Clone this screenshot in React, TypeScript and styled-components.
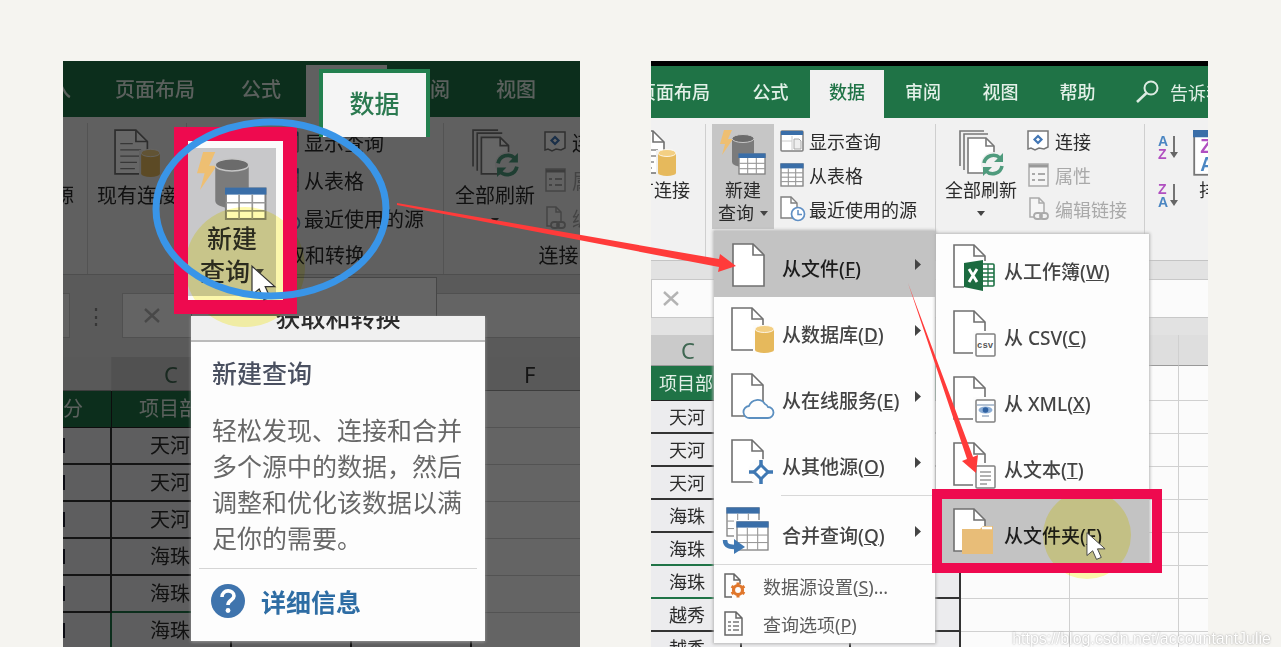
import React from "react";
import styled, { createGlobalStyle, css, ThemeProvider } from "styled-components";

const Global = createGlobalStyle`
  * { box-sizing: border-box; }
  body { margin: 0; background: #fff; font-family: "Noto Sans", "Noto Sans CJK SC", sans-serif; color: #2b2b2b; }
  button { font: inherit; color: inherit; background: none; border: 0; padding: 0; margin: 0; text-align: left; white-space: nowrap; }
  svg { display: block; flex: none; overflow: visible; }
`;

const large = { text: 20, row: 38, tabs: 56, ribbon: 158, icon: 48, under: 7, line: 24, strip: 18, formula: 45, gap: 19, head: 34, band: 37, cell: 37 };
const small = { text: 18, row: 34, tabs: 52, ribbon: 143, icon: 46, under: 3, line: 23, strip: 18, formula: 39, gap: 17, head: 31, band: 35, cell: 33 };
type Scale = typeof large;
const px = (k: keyof Scale) => (p: any) => `${p.theme[k]}px`;

/* ---------- page ---------- */
const Stage = styled.main`
  position: relative;
  display: grid;
  grid-template-columns: minmax(0, 63fr) minmax(0, 517fr) minmax(0, 71fr) minmax(0, 557fr) minmax(0, 73fr);
  padding-top: 61px;
  background: #f5f4f0;
  overflow: hidden;
`;
const Panel = styled.section<{ $col: number }>`
  position: relative;
  grid-column: ${(p) => p.$col};
  grid-row: 1;
  height: 586px;
  overflow: hidden;
  background: #fbfbfb;
`;
const Shade = styled.div`
  position: absolute;
  inset: 0;
  background: rgba(0, 0, 0, 0.6);
`;
const Arrows = styled.svg`
  position: absolute;
  inset: 0;
  width: 100%;
  height: 100%;
  pointer-events: none;
`;
const Watermark = styled.a`
  position: absolute;
  right: 10px;
  bottom: 0;
  font: 16px/16px "Liberation Sans", sans-serif;
  color: #fff;
  text-decoration: none;
  text-shadow: 0 0 2px #808080;
  opacity: 0.85;
`;

/* ---------- tab bar ---------- */
const TitleStrip = styled.div`
  height: 5px;
  background: #000;
`;
const Tabs = styled.nav`
  display: flex;
  height: ${px("tabs")};
  background: #1f7346;
  color: #e3f0e8;
`;
const Tab = styled.button<{ $w: number; $on?: boolean; $end?: number }>`
  flex: none;
  display: flex;
  align-items: center;
  justify-content: ${(p) => (p.$end ? "flex-end" : "center")};
  width: ${(p) => p.$w}px;
  padding-right: ${(p) => p.$end ?? 0}px;
  padding-bottom: 2px;
  font-size: ${px("text")};
  font-weight: 500;
  ${(p) => p.$on && css`margin-top: 4px; padding-bottom: 6px; background: #f1f1f1; color: #1f7346;`}
`;
const Search = styled.button`
  flex: none;
  display: flex;
  align-items: center;
  gap: 10px;
  margin-left: 20px;
  font-size: ${px("text")};
`;

/* ---------- ribbon ---------- */
const Ribbon = styled.div`
  display: flex;
  height: ${px("ribbon")};
  padding-top: 6px;
  overflow: hidden;
  background: #f1f1f1;
  border-bottom: 1px solid #c4c4c4;
`;
const Group = styled.div<{ $w: number; $end?: number }>`
  flex: none;
  display: flex;
  flex-direction: column;
  width: ${(p) => p.$w}px;
  align-items: ${(p) => (p.$end ? "flex-end" : "stretch")};
  padding-right: ${(p) => p.$end ?? 0}px;
  overflow: hidden;
  border-right: 1px solid #cfcfcf;
`;
const GroupBody = styled.div`
  display: flex;
`;
const GroupName = styled.div`
  padding-top: 5px;
  text-align: center;
  font-size: ${px("text")};
  line-height: 28px;
`;
const Big = styled.button<{ $w: number; $ml?: number; $on?: boolean }>`
  flex: none;
  display: flex;
  flex-direction: column;
  align-items: center;
  width: ${(p) => p.$w}px;
  margin-left: ${(p) => p.$ml ?? 0}px;
  padding: 6px 0 4px;
  background: ${(p) => (p.$on ? "#c6c6c6" : "none")};
  font-size: ${px("text")};
  line-height: ${px("line")};
  text-align: center;
  & > svg { margin-bottom: ${px("under")}; height: ${px("icon")}; width: auto; }
`;
const BigLine = styled.span`
  display: flex;
  align-items: center;
  justify-content: center;
  gap: 6px;
  height: ${px("line")};
`;
const List = styled.div<{ $ml: number }>`
  flex: none;
  display: flex;
  flex-direction: column;
  margin-left: ${(p) => p.$ml}px;
`;
const Small = styled.button<{ $off?: boolean }>`
  display: flex;
  align-items: center;
  gap: 5px;
  height: ${px("row")};
  font-size: ${px("text")};
  color: ${(p) => (p.$off ? "#a9a9a9" : "inherit")};
`;
const SortList = styled.div`
  flex: none;
  display: flex;
  flex-direction: column;
  gap: 20px;
  padding: 10px 12px 0;
`;

/* ---------- formula bar and sheet ---------- */
const Strip = styled.div<{ $h: "strip" | "gap" }>`
  height: ${(p) => px(p.$h)(p)};
  background: #e2e2e2;
`;
const Formula = styled.div`
  display: flex;
  height: ${px("formula")};
  background: #e2e2e2;
`;
const NameBox = styled.div`
  width: 7px;
  border: 1px solid #c8c8c8;
  border-left: 0;
  background: #f6f6f6;
`;
const Grip = styled.div`
  width: 52px;
  text-align: center;
  line-height: 44px;
  font-size: 22px;
  color: #888;
`;
const Entry = styled.div<{ $pad: number }>`
  flex: 1;
  display: flex;
  align-items: center;
  padding-left: ${(p) => p.$pad}px;
  border: 1px solid #c8c8c8;
  border-right: 0;
  background: #fbfbfb;
`;
const Sheet = styled.table`
  table-layout: fixed;
  border-collapse: separate;
  border-spacing: 0;
  width: 100%;
  font-size: ${px("text")};
  th, td {
    height: ${px("cell")};
    padding: 0;
    overflow: hidden;
    white-space: nowrap;
    font-weight: 400;
    text-align: left;
    line-height: 24px;
    border: 0 solid #d0d0d0;
    border-width: 0 1px 1px 0;
  }
  th:last-child, td:last-child { border-right-width: 0; }
`;
const ColHead = styled.th<{ $on?: boolean; $pad?: number }>`
  && {
    height: ${px("head")};
    padding-left: ${(p) => p.$pad ?? 0}px;
    background: ${(p) => (p.$on ? "#cacaca" : "#dedede")};
    border-bottom-color: #999;
    color: ${(p) => (p.$on ? "#3f6752" : "#333")};
    font-size: 22px;
  }
`;
const Band = styled.th<{ $pad: number }>`
  && {
    height: ${px("band")};
    padding-left: ${(p) => p.$pad}px;
    background: #1f7346;
    color: #e3f0e8;
    border-color: #222;
  }
`;
const Cell = styled.td<{ $pad?: number; $green?: boolean; $edge?: boolean }>`
  && {
    padding-left: ${(p) => p.$pad ?? 0}px;
    background: #ececee;
    border-color: #333;
    border-right-width: 2px;
    border-bottom-width: 2px;
    ${(p) => p.$green && css`border-bottom-color: #1f7346;`}
    ${(p) => p.$edge && css`border-right-color: #1f7346;`}
  }
`;
const Tick = styled.i`
  display: block;
  width: 2px;
  height: 15px;
  background: #223;
`;

/* ---------- menus ---------- */
const Menu = styled.div<{ $x: number; $y: number; $w: number }>`
  position: absolute;
  left: ${(p) => p.$x}px;
  top: ${(p) => p.$y}px;
  width: ${(p) => p.$w}px;
  display: flex;
  flex-direction: column;
  background: #fdfdfd;
  box-shadow: 0 0 3px 1px #b5b5b5;
`;
const Item = styled.button<{ $on?: boolean }>`
  display: flex;
  align-items: center;
  gap: 7px;
  height: 66px;
  padding: 0 14px 0 17px;
  font-size: 19px;
  font-weight: 500;
  color: ${(p) => (p.$on ? "#1c1c1c" : "#444")};
  background: ${(p) => (p.$on ? "#c3c3c3" : "none")};
`;
const ItemText = styled.span`
  flex: 1;
  padding-top: 8px;
`;
const MinorItem = styled.button`
  display: flex;
  align-items: center;
  gap: 17px;
  height: 38px;
  padding-left: 10px;
  font-size: 18px;
  color: #5c5c5c;
`;
const Rule = styled.hr<{ $from: number }>`
  width: calc(100% - ${(p) => p.$from}px);
  margin: 0 0 2px ${(p) => p.$from}px;
  border: 0;
  border-top: 1px solid #d8d8d8;
`;
const Frame = styled.div<{ $x: number; $y: number; $w: number; $h: number; $b: number }>`
  position: absolute;
  left: ${(p) => p.$x}px;
  top: ${(p) => p.$y}px;
  width: ${(p) => p.$w}px;
  height: ${(p) => p.$h}px;
  border: ${(p) => p.$b}px solid #ee0a4f;
  pointer-events: none;
`;
const Glow = styled.div<{ $x: number; $y: number; $r: number }>`
  position: absolute;
  left: ${(p) => p.$x - p.$r}px;
  top: ${(p) => p.$y - p.$r}px;
  width: ${(p) => p.$r * 2}px;
  height: ${(p) => p.$r * 2}px;
  border-radius: 50%;
  background: #fffbae;
  mix-blend-mode: multiply;
`;
const Pointer = styled.svg<{ $x: number; $y: number }>`
  position: absolute;
  left: ${(p) => p.$x}px;
  top: ${(p) => p.$y}px;
`;

/* ---------- spotlit pieces of the left panel ---------- */
const SpotTab = styled.button`
  && {
    position: absolute;
    left: 256px;
    top: 8px;
    width: 111px;
    height: 68px;
    padding-bottom: 6px;
    border: 4px solid #23804f;
    border-bottom: 0;
    background: #f5f5f5;
    color: #2b7a50;
    text-align: center;
    font-size: 25px;
    font-weight: 500;
  }
`;
const BackMenu = styled.div`
  position: absolute;
  left: 128px;
  top: 216px;
  width: 246px;
  height: 40px;
  background: #fdfdfd;
  border: 1px solid #b0b0b0;
`;
const Tip = styled.aside`
  position: absolute;
  left: 128px;
  top: 255px;
  width: 294px;
  background: #fdfdfd;
  box-shadow: 0 1px 3px #999;
`;
const TipHead = styled.div`
  height: 26px;
  overflow: hidden;
  background: #f0f0f0;
  border-bottom: 2px solid #bbb;
  text-align: center;
  font-size: 25px;
  font-weight: 500;
  line-height: 2px;
`;
const TipTitle = styled.h2`
  margin: 0;
  padding: 13px 21px 0;
  font-size: 25px;
  font-weight: 500;
  line-height: 36px;
  color: #4a5060;
`;
const TipText = styled.p`
  margin: 0;
  padding: 21px 16px 12px 21px;
  font-size: 25px;
  line-height: 36px;
  color: #686868;
`;
const TipFoot = styled.div`
  display: flex;
  align-items: center;
  gap: 16px;
  height: 73px;
  margin: 0 8px;
  padding: 0 0 8px 12px;
  border-top: 1px solid #d5d5d5;
`;
const TipLink = styled.a`
  font-size: 25px;
  font-weight: 700;
  color: #2e6da4;
  text-decoration: none;
`;
const Spot = styled.div`
  position: absolute;
  left: 111px;
  top: 66px;
  width: 123px;
  height: 187px;
  padding: 7px 7px 4px 0;
  border: 14px solid #ee0a4f;
  background: #fbfbfb;
`;
const SpotButton = styled.button`
  && {
    display: flex;
    flex-direction: column;
    align-items: center;
    width: 88px;
    height: 100%;
    padding-top: 4px;
    background: #c8c8ca;
    font-size: 25px;
    font-weight: 500;
    line-height: 33px;
  }
`;
const SpotLine = styled.span`
  display: flex;
  align-items: center;
  gap: 6px;
`;
const Ring = styled.svg`
  position: absolute;
  left: 90px;
  top: 58px;
`;

/* ---------- icons ---------- */
const PAGE = "M1 1h20l11 11v31H1z";
const Page = ({ stroke = "#707070" }: { stroke?: string }) => (
  <g fill="#fff" stroke={stroke} strokeWidth="1.6">
    <path d={PAGE} />
    <path d="M21 1v11h11" fill="none" />
  </g>
);
const Cyl = ({ x, y, w, h, c, top }: any) => (
  <g>
    <path d={`M${x} ${y + 3}v${h - 6}a${w / 2} 3 0 0 0 ${w} 0v-${h - 6}z`} fill={c} />
    <ellipse cx={x + w / 2} cy={y + 3} rx={w / 2} ry="3.5" fill={top} stroke="#fff" strokeWidth=".8" />
  </g>
);
const Icon = ({ children, w = 44, h = 46 }: any) => (
  <svg width={w} height={h} viewBox={`0 0 ${w} ${h}`} fill="none" aria-hidden="true">{children}</svg>
);
const Caret = () => <svg width="8" height="5" viewBox="0 0 8 5" aria-hidden="true"><path d="M0 0h8L4 5z" fill="#444" /></svg>;
const Next = () => <svg width="6" height="11" viewBox="0 0 6 11" aria-hidden="true"><path d="M0 0l6 5.5L0 11z" fill="#444" /></svg>;
const Cross = () => <svg width="16" height="15" viewBox="0 0 16 15" aria-hidden="true"><path d="M1 1l14 13M15 1L1 14" stroke="#b3b3b3" strokeWidth="2.4" /></svg>;

const ConnIcon = () => (
  <Icon>
    <Page />
    <path d="M6 14h12M6 20h20M6 26h18M6 32h16M6 38h14" stroke="#8a8a8a" strokeWidth="1.3" />
    <path d="M24 20h20v26H24z" fill="#f1f1f1" />
    <Cyl x={26} y={20} w={18} h={26} c="#e6b95c" top="#f3cf83" />
  </Icon>
);
const Grid = ({ x, y, w, h, rows = 3 }: any) => (
  <g>
    <rect x={x} y={y} width={w} height={h} fill="#fff" stroke="#808080" strokeWidth="1.3" />
    <rect x={x - 0.6} y={y - 0.6} width={w + 1.2} height={h / 5 + 0.6} fill="#3a6ea8" />
    {[1, 2].map((i) => <path key={i} d={`M${x + (w * i) / 3} ${y + h / 5}v${h * 0.8}`} stroke="#999" strokeWidth="1.1" />)}
    {Array.from({ length: rows - 1 }, (_, i) => (
      <path key={i} d={`M${x} ${y + h / 5 + (h * 0.8 * (i + 1)) / rows}h${w}`} stroke="#999" strokeWidth="1.1" />
    ))}
  </g>
);
const QueryIcon = ({ size = 46 }: { size?: number }) => (
  <svg width={size} height={size} viewBox="0 0 46 46" fill="none" aria-hidden="true">
    <path d="M4 0h8L8 9h5L2 25l3-11H0z" fill="#eebf72" />
    <path d="M12 9v23a11 5 0 0 0 22 0V9z" fill="#7b7b7b" />
    <ellipse cx="23" cy="8.500" rx="11" ry="4" fill="#6b6b6b" stroke="#c6c6c6" />
    <Grid x={19} y={24} w={26} h={20} rows={3} />
  </svg>
);
const RefreshIcon = () => (
  <Icon>
    <path d="M1 36V1h24M5 40V4h24" stroke="#777" strokeWidth="1.6" />
    <path d="M9 8h18l8 8v27H9z" fill="#fff" stroke="#777" strokeWidth="1.6" />
    <path d="M27 8v8h8" stroke="#777" strokeWidth="1.6" />
    <circle cx="34" cy="34" r="12" fill="#f1f1f1" />
    <path d="M25 33a9.500 9.500 0 0 1 16-5M43 36a9.500 9.500 0 0 1-16 5" stroke="#4f9b7d" strokeWidth="3.600" />
    <path d="M44 23v9h-9zM24 46v-9h9z" fill="#4f9b7d" />
  </Icon>
);
const ShowIcon = () => (
  <Icon w={24} h={24}>
    <rect x="1" y="2" width="22" height="20" rx="1" fill="#fff" stroke="#808080" strokeWidth="1.5" />
    <path d="M1 2h22v4H1z" fill="#3a6ea8" />
    <path d="M2 12h10V7M12 12v9" stroke="#ccc" />
    <path d="M14 10h5l2 2v8h-7z" fill="#eee" stroke="#aaa" />
  </Icon>
);
const TableIcon = () => <Icon w={24} h={24}><Grid x={1} y={1} w={22} h={22} rows={4} /></Icon>;
const RecentIcon = () => (
  <Icon w={24} h={26}>
    <path d="M1 1h10l6 6v15H1z" fill="#fff" stroke="#808080" strokeWidth="1.4" />
    <path d="M11 1v6h6" stroke="#808080" strokeWidth="1.4" />
    <circle cx="18" cy="18" r="6.500" fill="#fff" stroke="#5f8fc4" strokeWidth="1.700" />
    <path d="M18 14v4.500h4" stroke="#5f8fc4" strokeWidth="1.500" />
  </Icon>
);
const LinkIcon = () => (
  <Icon w={24} h={24}>
    <path d="M2 2h20v16l-4 2-5-1-4 2-4-2-3 1z" fill="#fff" stroke="#777" strokeWidth="1.500" />
    <path d="M12 7l3.500 3.500L12 14l-3.500-3.500z" stroke="#4377b5" strokeWidth="2.200" />
  </Icon>
);
const PropIcon = () => (
  <Icon w={24} h={24}>
    <rect x="3" y="1" width="19" height="22" fill="#f5f5f5" stroke="#aaa" strokeWidth="1.500" />
    <path d="M3 3h19" stroke="#999" strokeWidth="3" />
    <path d="M6 11h3M12 11h7M6 17h3M12 17h7" stroke="#aaa" strokeWidth="1.800" />
  </Icon>
);
const EditIcon = () => (
  <Icon w={24} h={24}>
    <path d="M8 20H4V1h9l5 5v9" fill="#f5f5f5" stroke="#aaa" strokeWidth="1.500" />
    <path d="M13 1v5h5" stroke="#aaa" strokeWidth="1.500" />
    <rect x="8" y="16" width="8" height="6" rx="3" stroke="#aaa" strokeWidth="1.800" />
    <rect x="14" y="16" width="8" height="6" rx="3" stroke="#aaa" strokeWidth="1.800" />
  </Icon>
);
const BLUE = "#4b86c2";
const PURPLE = "#b04fc0";
const SortIcon = ({ up }: { up?: boolean }) => (
  <svg width="24" height="28" viewBox="0 0 24 28" aria-hidden="true" fontFamily="Liberation Sans" fontSize="14" fontWeight="700">
    <text x="1" y="12" fill={up ? PURPLE : BLUE}>{up ? "Z" : "A"}</text>
    <text x="1" y="25" fill={up ? BLUE : PURPLE}>{up ? "A" : "Z"}</text>
    <path d="M17 2v20" stroke="#666" strokeWidth="1.800" />
    <path d="M13 18h8l-4 6z" fill="#666" />
  </svg>
);
const SortBoxIcon = () => (
  <svg width="40" height="38" viewBox="0 0 40 38" aria-hidden="true" fontFamily="Liberation Sans" fontSize="16" fontWeight="700">
    <rect x="1" y="1" width="38" height="36" fill="#fff" stroke="#777" strokeWidth="1.500" />
    <path d="M0 0h40v6H0z" fill="#3a6ea8" />
    <text x="6" y="19" fill={PURPLE}>Z</text>
    <text x="6" y="34" fill={BLUE}>A</text>
  </svg>
);
const DbIcon = () => (
  <Icon>
    <Page />
    <path d="M22 18h22v28H22z" fill="#fdfdfd" />
    <Cyl x={24} y={19} w={19} h={27} c="#e6b95c" top="#f3cf83" />
  </Icon>
);
const CloudIcon = () => (
  <Icon>
    <Page />
    <path d="M19 45a6 6 0 0 1-1-12 9 9 0 0 1 16-2 6 6 0 0 1 3 3 5.500 5.500 0 0 1 0 11z" fill="#fdfdfd" stroke="#5b8fc0" strokeWidth="1.800" />
  </Icon>
);
const TargetIcon = () => (
  <Icon>
    <Page />
    <circle cx="30" cy="33" r="13" fill="#fdfdfd" />
    <path d="M30 26l7 7-7 7-7-7z" fill="#fff" stroke="#3f78b3" strokeWidth="3" />
    <path d="M30 21v5M30 40v5M18 33h5M37 33h5" stroke="#3f78b3" strokeWidth="3.500" />
  </Icon>
);
const MergeIcon = () => (
  <svg width="44" height="46" viewBox="8 0 44 46" fill="none" aria-hidden="true">
    <Grid x={4} y={0} w={32} h={28} />
    <rect x="11" y="12" width="36" height="33" fill="#fdfdfd" />
    <Grid x={14} y={14} w={31} h={28} />
    <path d="M2 32c0 7 6 7 12 7" stroke="#3f78b3" strokeWidth="4.500" />
    <path d="M11 31l11 8-11 7z" fill="#3f78b3" />
  </svg>
);
const GearIcon = () => (
  <Icon w={22} h={26}>
    <path d="M8 24H1V1h9l6 6v4M10 1v6h6" stroke="#666" strokeWidth="1.500" />
    <circle cx="14" cy="17" r="4.500" stroke="#e0772c" strokeWidth="3.200" />
    <path d="M14 9.500v3M14 21.500v3M7.500 13.200l2.500 1.500M18 19.300l2.500 1.500M7.500 20.800l2.500-1.500M18 14.700l2.500-1.500" stroke="#e0772c" strokeWidth="3" />
  </Icon>
);
const OptionsIcon = () => (
  <Icon w={22} h={26}>
    <path d="M1 1h11l6 6v17H1zM12 1v6h6" stroke="#666" strokeWidth="1.500" />
    <path d="M4 11h3M9 11h6M4 15h3M9 15h6M4 19h3M9 19h6" stroke="#777" strokeWidth="1.500" />
  </Icon>
);
const ExcelIcon = () => (
  <Icon>
    <Page />
    <path d="M11 17h31v28H11z" fill="#fdfdfd" />
    <rect x="27" y="20" width="14" height="22" rx="1" fill="#fff" stroke="#1f7346" strokeWidth="1.600" />
    <path d="M27 25h14M27 29h14M27 33h14M27 37h14M35 20v22" stroke="#1f7346" strokeWidth="1.300" />
    <path d="M11 19l19-3v31l-19-4z" fill="#1c6b40" />
    <path d="M16 25l8 13M24 25l-8 13" stroke="#fff" strokeWidth="2.800" />
  </Icon>
);
const Badge = ({ children }: any) => (
  <Icon>
    <Page />
    <rect x="20" y="21" width="24" height="26" fill="#fdfdfd" />
    <rect x="23" y="24" width="19" height="22" rx="1" fill="#fff" stroke="#808080" strokeWidth="1.500" />
    {children}
  </Icon>
);
const CsvIcon = () => (
  <Badge><text x="24" y="38" fontFamily="Liberation Mono" fontSize="9" fontWeight="700" fill="#555">csv</text></Badge>
);
const XmlIcon = () => (
  <Badge>
    <path d="M24 29h17M29 40h7" stroke="#b5c3d4" strokeWidth="2" />
    <ellipse cx="32.500" cy="34" rx="7" ry="3.500" fill="#8caed6" />
    <circle cx="32.500" cy="34" r="2.800" fill="#2f62a3" />
  </Badge>
);
const TextIcon = () => (
  <Badge><path d="M27 30h11M27 34h11M27 38h11M27 42h7" stroke="#999" strokeWidth="1.300" /></Badge>
);
const FolderIcon = () => (
  <Icon>
    <Page />
    <path d="M9 21h18l3-3h10v28H9z" fill="#e8bd78" />
    <path d="M29 20h10" stroke="#fff" strokeWidth="2.500" />
  </Icon>
);
const Lens = () => (
  <svg width="24" height="24" viewBox="0 0 24 24" fill="none" aria-hidden="true">
    <circle cx="15" cy="8" r="6.500" stroke="#dcebe2" strokeWidth="2" />
    <path d="M10.500 13L1 22" stroke="#dcebe2" strokeWidth="2.500" />
  </svg>
);
const Help = () => (
  <svg width="34" height="34" viewBox="0 0 34 34" fill="none" aria-hidden="true">
    <circle cx="17" cy="17" r="17" fill="#3f74ad" />
    <path d="M11 13c0-8 12-8 12-1 0 4-6 4-6 9" stroke="#fff" strokeWidth="3.600" />
    <circle cx="17" cy="26.500" r="2.400" fill="#fff" />
  </svg>
);
const CURSOR = "M1 1v24l6-5 4 9 5-2-4-9h8z";

/* ---------- data ---------- */
const leftRows = ["天河", "天河", "天河", "海珠", "海珠", "海珠"];
const rightRows = ["天河", "天河", "天河", "海珠", "海珠", "海珠", "越秀", "越秀"];
const fileMenu = [
  { text: "从文件", k: "F", icon: <Icon><g transform="translate(1 2)"><Page /></g></Icon>, on: true },
  { text: "从数据库", k: "D", icon: <DbIcon /> },
  { text: "从在线服务", k: "E", icon: <CloudIcon /> },
  { text: "从其他源", k: "O", icon: <TargetIcon /> },
];
const subMenu = [
  { text: "从工作簿", k: "W", icon: <ExcelIcon /> },
  { text: "从 CSV", k: "C", icon: <CsvIcon /> },
  { text: "从 XML", k: "X", icon: <XmlIcon /> },
  { text: "从文本", k: "T", icon: <TextIcon /> },
  { text: "从文件夹", k: "F", icon: <FolderIcon />, on: true },
];
const Key = ({ k }: { k: string }) => <>(<u>{k}</u>)</>;

function QuerySources() {
  return (
    <>
      <Small><ShowIcon />显示查询</Small>
      <Small><TableIcon />从表格</Small>
      <Small><RecentIcon />最近使用的源</Small>
    </>
  );
}
function Links() {
  return (
    <>
      <Small><LinkIcon />连接</Small>
      <Small $off><PropIcon />属性</Small>
      <Small $off><EditIcon />编辑链接</Small>
    </>
  );
}

function LeftPanel() {
  return (
    <ThemeProvider theme={large}>
      <Panel $col={2}>
        <Tabs>
          <Tab $w={31} $end={23}>插入</Tab>
          <Tab $w={122}>页面布局</Tab>
          <Tab $w={90}>公式</Tab>
          <Tab $w={81} $on aria-label="数据" />
          <Tab $w={86}>审阅</Tab>
          <Tab $w={86}>视图</Tab>
        </Tabs>
        <Ribbon>
          <Group $w={25} $end={13}><Big $w={80}><Icon />其他来源</Big></Group>
          <Group $w={99}>
            <Big $w={80} $ml={9}><ConnIcon />现有连接</Big>
          </Group>
          <Group $w={257}>
            <GroupBody>
              <List $ml={88}><QuerySources /></List>
            </GroupBody>
            <GroupName>获取和转换</GroupName>
          </Group>
          <Group $w={230}>
            <GroupBody>
              <Big $w={80} $ml={11}><RefreshIcon />全部刷新<BigLine><Caret /></BigLine></Big>
              <List $ml={8}><Links /></List>
            </GroupBody>
            <GroupName>连接</GroupName>
          </Group>
        </Ribbon>
        <Strip $h="strip" />
        <Formula><NameBox /><Grip>⋮</Grip><Entry $pad={21}><Cross /></Entry></Formula>
        <Strip $h="gap" />
        <Sheet>
          <colgroup><col width="49" /><col width="120" /><col width="120" /><col width="120" /><col /></colgroup>
          <thead>
            <tr><ColHead /><ColHead $on $pad={52}>C</ColHead><ColHead /><ColHead /><ColHead $pad={52}>F</ColHead></tr>
            <tr><Band $pad={0}>分</Band><Band $pad={27}>项目部</Band><Band $pad={0} /><Band $pad={0} /><td /></tr>
          </thead>
          <tbody>
            {leftRows.map((name, i) => (
              <tr key={i}>
                <Cell $edge={i === 5}><Tick /></Cell>
                <Cell $pad={38} $green={i === 4}>{name}</Cell>
                <Cell /><Cell /><td />
              </tr>
            ))}
          </tbody>
        </Sheet>
        <BackMenu />
        <Shade />
        <SpotTab>数据</SpotTab>
        <Tip>
          <TipHead>获取和转换</TipHead>
          <TipTitle>新建查询</TipTitle>
          <TipText>轻松发现、连接和合并多个源中的数据，然后调整和优化该数据以满足你的需要。</TipText>
          <TipFoot><Help /><TipLink href="#details">详细信息</TipLink></TipFoot>
        </Tip>
        <Spot>
          <SpotButton>
            <QueryIcon size={70} />
            <SpotLine>新建</SpotLine>
            <SpotLine>查询<Caret /></SpotLine>
          </SpotButton>
        </Spot>
        <Glow $x={182} $y={206} $r={60} />
        <Frame $x={111} $y={66} $w={123} $h={187} $b={14} />
        <Pointer $x={187} $y={204} width="28" height="36" viewBox="0 0 22 30"><path d={CURSOR} fill="#fff" stroke="#333" /></Pointer>
        <Ring width="240" height="184" viewBox="0 0 240 184" fill="none" aria-hidden="true">
          <ellipse cx="118" cy="90" rx="115" ry="87" stroke="#3995e8" strokeWidth="7" />
        </Ring>
      </Panel>
    </ThemeProvider>
  );
}

function RightPanel() {
  return (
    <ThemeProvider theme={small}>
      <Panel $col={4}>
        <TitleStrip />
        <Tabs>
          <Tab $w={80} $end={21}>页面布局</Tab>
          <Tab $w={79}>公式</Tab>
          <Tab $w={74} $on>数据</Tab>
          <Tab $w={78}>审阅</Tab>
          <Tab $w={77}>视图</Tab>
          <Tab $w={77}>帮助</Tab>
          <Search><Lens />告诉我</Search>
        </Tabs>
        <Ribbon>
          <Group $w={55} $end={11}><Big $w={80}><ConnIcon />现有连接</Big></Group>
          <Group $w={230}>
            <GroupBody>
              <Big $w={62} $ml={6} $on>
                <QueryIcon />
                <BigLine>新建</BigLine>
                <BigLine>查询<Caret /></BigLine>
              </Big>
              <List $ml={6}><QuerySources /></List>
            </GroupBody>
          </Group>
          <Group $w={209}>
            <GroupBody>
              <Big $w={72} $ml={9}><RefreshIcon />全部刷新<BigLine><Caret /></BigLine></Big>
              <List $ml={9}><Links /></List>
            </GroupBody>
          </Group>
          <SortList><SortIcon /><SortIcon up /></SortList>
          <Big $w={48}><SortBoxIcon />排序</Big>
        </Ribbon>
        <Strip $h="strip" />
        <Formula><Entry $pad={11}><Cross /></Entry></Formula>
        <Strip $h="gap" />
        <Sheet>
          <colgroup><col width="91" /><col width="109" /><col width="110" /><col width="109" /><col width="109" /><col /></colgroup>
          <thead>
            <tr><ColHead $on $pad={30}>C</ColHead><ColHead /><ColHead /><ColHead /><ColHead /><ColHead /></tr>
            <tr><Band $pad={8}>项目部</Band><Band $pad={0} /><Band $pad={0} /><td /><td /><td /></tr>
          </thead>
          <tbody>
            {rightRows.map((name, i) => (
              <tr key={i}>
                <Cell $pad={18} $green={i === 4 || i === 5}>{name}</Cell>
                <Cell /><Cell /><td /><td /><td />
              </tr>
            ))}
          </tbody>
        </Sheet>
        <Menu $x={63} $y={170} $w={221}>
          {fileMenu.map((m) => (
            <Item key={m.k} $on={m.on}>{m.icon}<ItemText>{m.text}<Key k={m.k} /></ItemText><Next /></Item>
          ))}
          <Rule $from={67} />
          <Item><MergeIcon /><ItemText>合并查询<Key k="Q" /></ItemText><Next /></Item>
          <Rule $from={0} />
          <MinorItem><GearIcon /><span>数据源设置<Key k="S" />...</span></MinorItem>
          <MinorItem><OptionsIcon /><span>查询选项<Key k="P" /></span></MinorItem>
        </Menu>
        <Menu $x={285} $y={173} $w={213}>
          {subMenu.map((m) => (
            <Item key={m.text} $on={m.on}>{m.icon}<ItemText>{m.text}<Key k={m.k} /></ItemText></Item>
          ))}
        </Menu>
        <Glow $x={436} $y={474} $r={44} />
        <Frame $x={281} $y={428} $w={230} $h={84} $b={10} />
        <Pointer $x={435} $y={470} width="21" height="30" viewBox="0 0 22 30"><path d={CURSOR} fill="#fff" stroke="#444" /></Pointer>
      </Panel>
    </ThemeProvider>
  );
}

export default function App() {
  return (
    <>
      <Global />
      <Stage>
        <LeftPanel />
        <RightPanel />
        <Arrows viewBox="0 0 1281 647" preserveAspectRatio="none" fill="#ff3b3a" aria-hidden="true">
          <path d="M397 203l322 56 1-5 16 12-18 6 1-5L397 205z" />
          <path d="M908 283l65 174 5-2-2 18-14-12 5-2z" />
        </Arrows>
        <Watermark href="https://blog.csdn.net/accountantJulie">https://blog.csdn.net/accountantJulie</Watermark>
      </Stage>
    </>
  );
}
